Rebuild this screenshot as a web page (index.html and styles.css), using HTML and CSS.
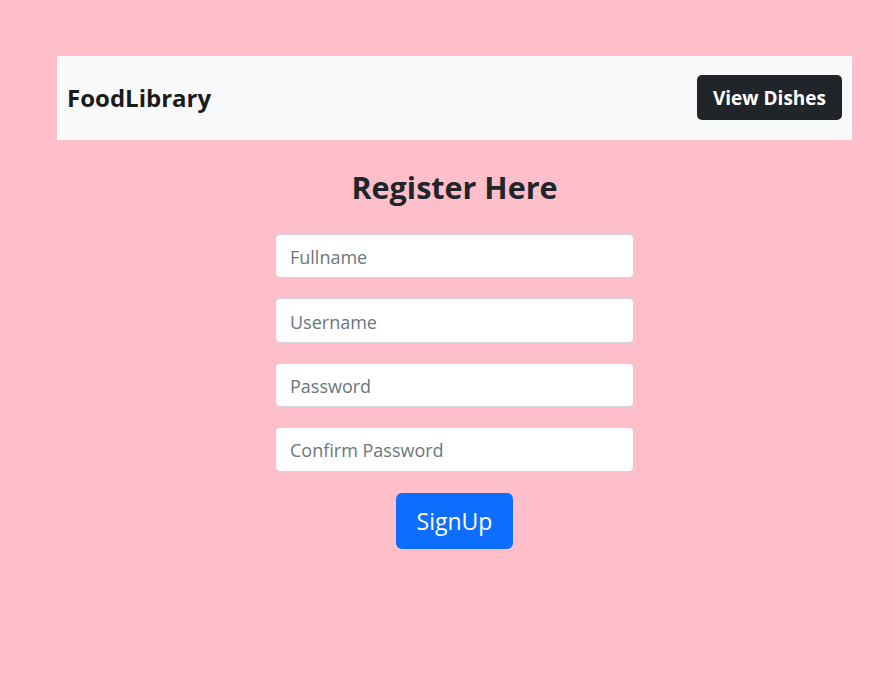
FILE: index.html
```html
<!DOCTYPE html>
<html lang="en">
<head>
<meta charset="utf-8">
<title>FoodLibrary - Register</title>
<link rel="stylesheet" href="styles.css">
</head>
<body>
<div class="page">
  <nav class="navbar">
    <span class="brand">FoodLibrary</span>
    <a class="btn-dark" href="#">View Dishes</a>
  </nav>
  <main class="register">
    <h1 class="title">Register Here</h1>
    <form class="form">
      <input class="field" type="text" placeholder="Fullname">
      <input class="field" type="text" placeholder="Username">
      <input class="field" type="password" placeholder="Password">
      <input class="field" type="password" placeholder="Confirm Password">
      <button class="btn-primary" type="button">SignUp</button>
    </form>
  </main>
</div>
</body>
</html>
```
FILE: styles.css
```css
html, body {
  margin: 0;
  padding: 0;
  background: #ffbfca;
  font-family: "Open Sans", "Noto Sans", sans-serif;
  color: #212529;
}
.page {
  padding: 56px 40px 0 57px;
}
.navbar {
  height: 84px;
  background: #f8f9fa;
  display: flex;
  align-items: center;
  justify-content: space-between;
  padding: 0 10px;
  box-sizing: border-box;
}
.brand {
  font-size: 24px;
  font-weight: 700;
  color: #1a1a1a;
  margin-top: -2px;
}
.btn-dark {
  background: #212529;
  color: #fff;
  text-decoration: none;
  font-weight: 700;
  font-size: 19px;
  height: 45px;
  padding: 1px 16px 0;
  margin-top: -1px;
  display: flex;
  align-items: center;
  border-radius: 5px;
  box-sizing: border-box;
}
.register {
  display: flex;
  flex-direction: column;
  align-items: center;
}
.title {
  font-size: 30.5px;
  font-weight: 700;
  margin: 27px 0 0;
  line-height: 40px;
}
.form {
  margin-top: 27px;
  display: flex;
  flex-direction: column;
  align-items: center;
  gap: 20px;
}
.field {
  width: 359px;
  height: 44.4px;
  box-sizing: border-box;
  border: 1px solid #ced4da;
  border-radius: 5px;
  background: #fff;
  padding: 2px 14px 0;
  font-family: inherit;
  font-size: 18px;
  color: #212529;
  outline: none;
}
.field::placeholder {
  color: #6c757d;
}
.btn-primary {
  margin-top: 1px;
  width: 117px;
  height: 56px;
  background: #0d6efd;
  color: #fff;
  border: none;
  border-radius: 6px;
  font-family: inherit;
  font-size: 23px;
}
```
